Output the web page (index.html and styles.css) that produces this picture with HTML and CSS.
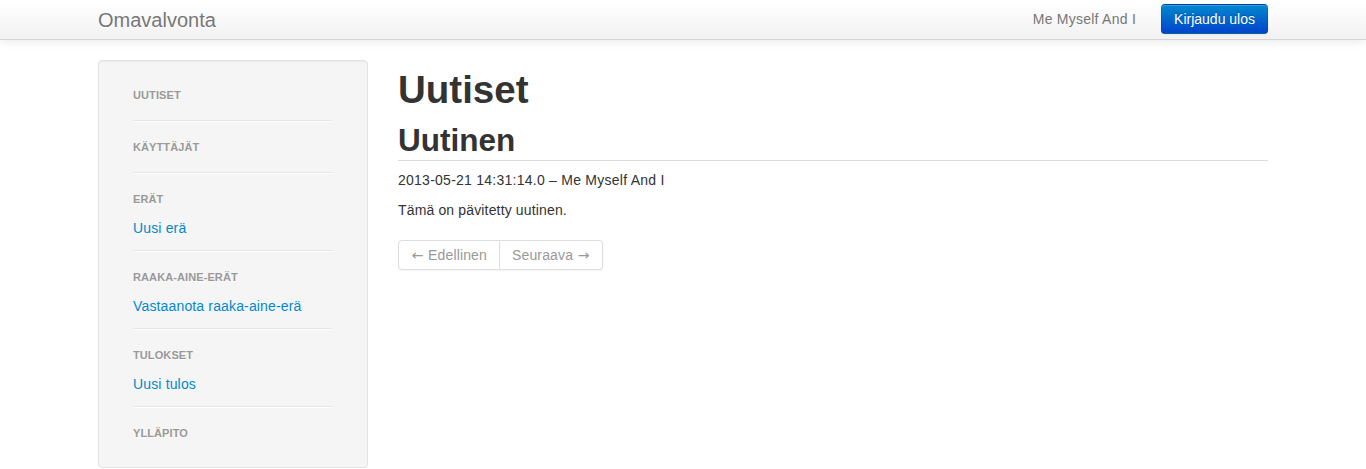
FILE: index.html
```
<!DOCTYPE html>
<html lang="fi">
<head>
<meta charset="utf-8">
<title>Omavalvonta</title>
<link rel="stylesheet" href="styles.css">
</head>
<body>
<header class="navbar">
  <div class="container navbar-inner">
    <a class="brand" href="#">Omavalvonta</a>
    <div class="navbar-right">
      <span class="navbar-text">Me Myself And I</span>
      <a class="btn btn-primary" href="#">Kirjaudu ulos</a>
    </div>
  </div>
</header>
<div class="container main">
  <aside class="well">
    <ul class="nav-list">
      <li class="nav-header">Uutiset</li>
      <li class="divider"></li>
      <li class="nav-header">Käyttäjät</li>
      <li class="divider"></li>
      <li class="nav-header">Erät</li>
      <li class="nav-item"><a href="#">Uusi erä</a></li>
      <li class="divider"></li>
      <li class="nav-header">Raaka-aine-erät</li>
      <li class="nav-item"><a href="#">Vastaanota raaka-aine-erä</a></li>
      <li class="divider"></li>
      <li class="nav-header">Tulokset</li>
      <li class="nav-item"><a href="#">Uusi tulos</a></li>
      <li class="divider"></li>
      <li class="nav-header">Ylläpito</li>
    </ul>
  </aside>
  <main class="content">
    <h1 class="title">Uutiset</h1>
    <h2 class="news-title">Uutinen</h2>
    <p class="meta">2013-05-21 14:31:14.0 – Me Myself And I</p>
    <p class="body-text">Tämä on pävitetty uutinen.</p>
    <ul class="pagination">
      <li><span class="page-link"><span class="arrow">&larr;</span> Edellinen</span></li>
      <li><span class="page-link">Seuraava <span class="arrow">&rarr;</span></span></li>
    </ul>
  </main>
</div>
</body>
</html>
```
FILE: styles.css
```
* { box-sizing: border-box; }
html, body { margin: 0; padding: 0; }
body {
  font-family: "Liberation Sans", Arial, Helvetica, sans-serif;
  font-size: 14px;
  line-height: 20px;
  letter-spacing: 0.15px;
  color: #333;
  background: #fff;
}
a { color: #0088cc; text-decoration: none; }
.container { width: 1170px; margin: 0 auto; }

.navbar {
  height: 40px;
  background: linear-gradient(to bottom, #ffffff, #f2f2f2);
  border-bottom: 1px solid #d4d4d4;
  box-shadow: 0 1px 10px rgba(0,0,0,0.1);
  position: relative;
  z-index: 2;
}
.navbar-inner {
  display: flex;
  justify-content: space-between;
  align-items: flex-start;
  height: 39px;
}
.brand {
  display: block;
  padding: 10px 0;
  font-size: 20px;
  line-height: 20px;
  letter-spacing: 0;
  color: #777;
  text-shadow: 0 1px 0 #fff;
}
.navbar-right { display: flex; align-items: flex-start; }
.navbar-text {
  line-height: 39px;
  color: #777;
  letter-spacing: 0.25px;
}
.btn {
  display: inline-block;
  margin-top: 4px;
  margin-left: 25px;
  padding: 4px 12px;
  font-size: 14px;
  line-height: 20px;
  letter-spacing: 0;
  border-radius: 4px;
  border: 1px solid rgba(0,0,0,0.1);
  border-bottom-color: rgba(0,0,0,0.25);
}
.btn-primary {
  color: #fff;
  text-shadow: 0 -1px 0 rgba(0,0,0,0.25);
  background: linear-gradient(to bottom, #0088cc, #0044cc);
  box-shadow: inset 0 1px 0 rgba(255,255,255,0.2), 0 1px 2px rgba(0,0,0,0.05);
}

.main {
  display: grid;
  grid-template-columns: 270px 870px;
  column-gap: 30px;
  align-items: start;
  padding-top: 20px;
}

.well {
  background: #f5f5f5;
  border: 1px solid #e3e3e3;
  border-radius: 4px;
  box-shadow: inset 0 1px 1px rgba(0,0,0,0.05);
  padding: 24px 35px 24px 34px;
}
.nav-list { list-style: none; margin: 0; padding: 0; }
.nav-header {
  font-size: 11px;
  font-weight: bold;
  line-height: 20px;
  letter-spacing: 0.1px;
  color: #999;
  text-transform: uppercase;
  text-shadow: 0 1px 0 rgba(255,255,255,0.5);
}
.nav-item {
  margin: 9px 0 -3px;
  line-height: 20px;
  text-shadow: 0 1px 0 rgba(255,255,255,0.5);
}
.divider {
  height: 2px;
  margin: 15px 0;
  background: #e5e5e5;
  border-bottom: 1px solid #fff;
}

.content { min-width: 0; }
.title {
  margin: 10px 0;
  font-size: 38.5px;
  line-height: 40px;
  font-weight: bold;
  letter-spacing: 0;
  color: #333;
}
.news-title {
  margin: 10px 0 9px;
  font-size: 31.5px;
  line-height: 40px;
  font-weight: bold;
  letter-spacing: 0;
  color: #333;
  border-bottom: 1px solid #dcdcdc;
}
.meta, .body-text { margin: 0 0 10px; }
.meta { letter-spacing: 0.25px; }

.pagination {
  display: flex;
  width: max-content;
  list-style: none;
  margin: 20px 0;
  padding: 0;
  border-radius: 4px;
  box-shadow: 0 1px 2px rgba(0,0,0,0.05);
}
.page-link {
  display: block;
  padding: 4px 12px;
  line-height: 20px;
  color: #999;
  background: #fff;
  border: 1px solid #ddd;
}
.arrow {
  display: inline-block;
  width: 13px;
  text-align: center;
  font-family: "DejaVu Sans", sans-serif;
  font-size: 14px;
  letter-spacing: 0;
}
.pagination li:first-child .page-link {
  border-radius: 4px 0 0 4px;
}
.pagination li:last-child .page-link {
  border-left-width: 0;
  border-radius: 0 4px 4px 0;
}
```
